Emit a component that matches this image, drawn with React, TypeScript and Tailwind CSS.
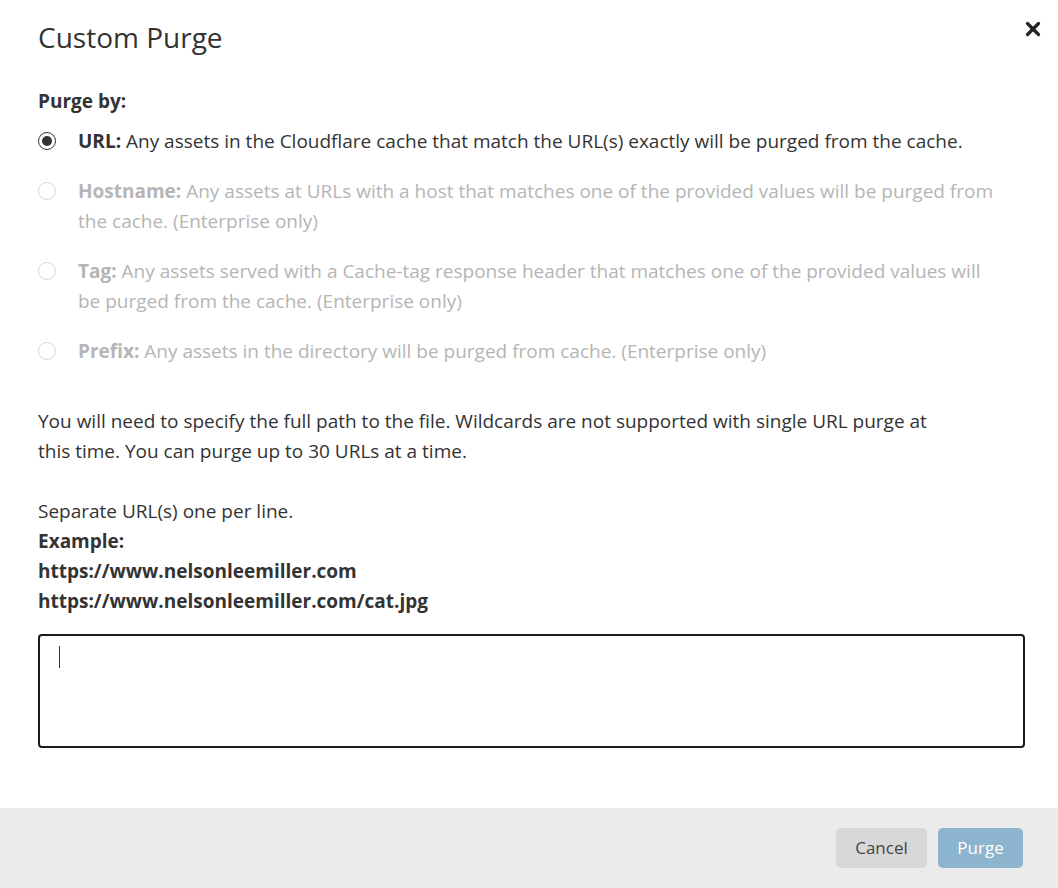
import { X } from "lucide-react";

const options = [
  {
    key: "url",
    label: "URL:",
    text: "Any assets in the Cloudflare cache that match the URL(s) exactly will be purged from the cache.",
    checked: true,
  },
  {
    key: "hostname",
    label: "Hostname:",
    text: "Any assets at URLs with a host that matches one of the provided values will be purged from the cache. (Enterprise only)",
    checked: false,
  },
  {
    key: "tag",
    label: "Tag:",
    text: "Any assets served with a Cache-tag response header that matches one of the provided values will be purged from the cache. (Enterprise only)",
    checked: false,
  },
  {
    key: "prefix",
    label: "Prefix:",
    text: "Any assets in the directory will be purged from cache. (Enterprise only)",
    checked: false,
  },
];

const Radio = ({ checked }: { checked: boolean }) => (
  <span
    className={`mt-[6px] flex h-[18px] w-[18px] shrink-0 items-center justify-center rounded-full border bg-white ${
      checked ? "border-[#333]" : "border-[#d6d6d6]"
    }`}
  >
    {checked && <span className="h-[10px] w-[10px] rounded-full bg-[#333]" />}
  </span>
);

export default function App() {
  return (
    <div
      className="flex min-h-[888px] w-[1058px] flex-col bg-white text-[19px] leading-[30px] text-[#333]"
      style={{ fontFamily: '"Open Sans", "Noto Sans", sans-serif' }}
    >
      <div className="flex-1 px-[38px]">
        <div className="flex items-start justify-between pt-[14px]">
          <h1 className="text-[28px] font-normal leading-[46px] text-[#333]">Custom Purge</h1>
          <button className="mr-[-24px] mt-[4px] text-[#222]">
            <X className="h-[22px] w-[22px]" strokeWidth={3.5} />
          </button>
        </div>

        <div className="mt-[26px] font-bold">Purge by:</div>

        <div className="mt-[10px] flex flex-col gap-[20px]">
          {options.map((o) => (
            <label key={o.key} className="flex items-start gap-[22px]">
              <Radio checked={o.checked} />
              <span className={`max-w-[920px] ${o.checked ? "text-[#333]" : "text-[#b5b5b5]"}`}>
                <b className="font-bold">{o.label}</b> {o.text}
              </span>
            </label>
          ))}
        </div>

        <p className="mt-[40px] max-w-[900px]">
          You will need to specify the full path to the file. Wildcards are not supported with single URL purge at
          this time. You can purge up to 30 URLs at a time.
        </p>

        <div className="mt-[30px]">
          <p>Separate URL(s) one per line.</p>
          <p className="font-bold">Example:</p>
          <p className="font-bold">https://www.nelsonleemiller.com</p>
          <p className="font-bold">https://www.nelsonleemiller.com/cat.jpg</p>
        </div>

        <div className="mt-[18px] h-[114px] w-[987px] rounded-[4px] border-2 border-[#1b1b1b] px-[19px] pt-[10px]">
          <span className="block h-[22px] w-px bg-[#333]" />
        </div>
      </div>

      <div className="mt-[60px] flex h-[80px] items-center justify-end gap-[11px] bg-[#ebebeb] pr-[35px]">
        <button className="h-[40px] w-[91px] rounded-[5px] bg-[#d8d8d8] text-[17px] text-[#444]">Cancel</button>
        <button className="h-[40px] w-[85px] rounded-[5px] bg-[#8cb4cf] text-[17px] text-white">Purge</button>
      </div>
    </div>
  );
}
